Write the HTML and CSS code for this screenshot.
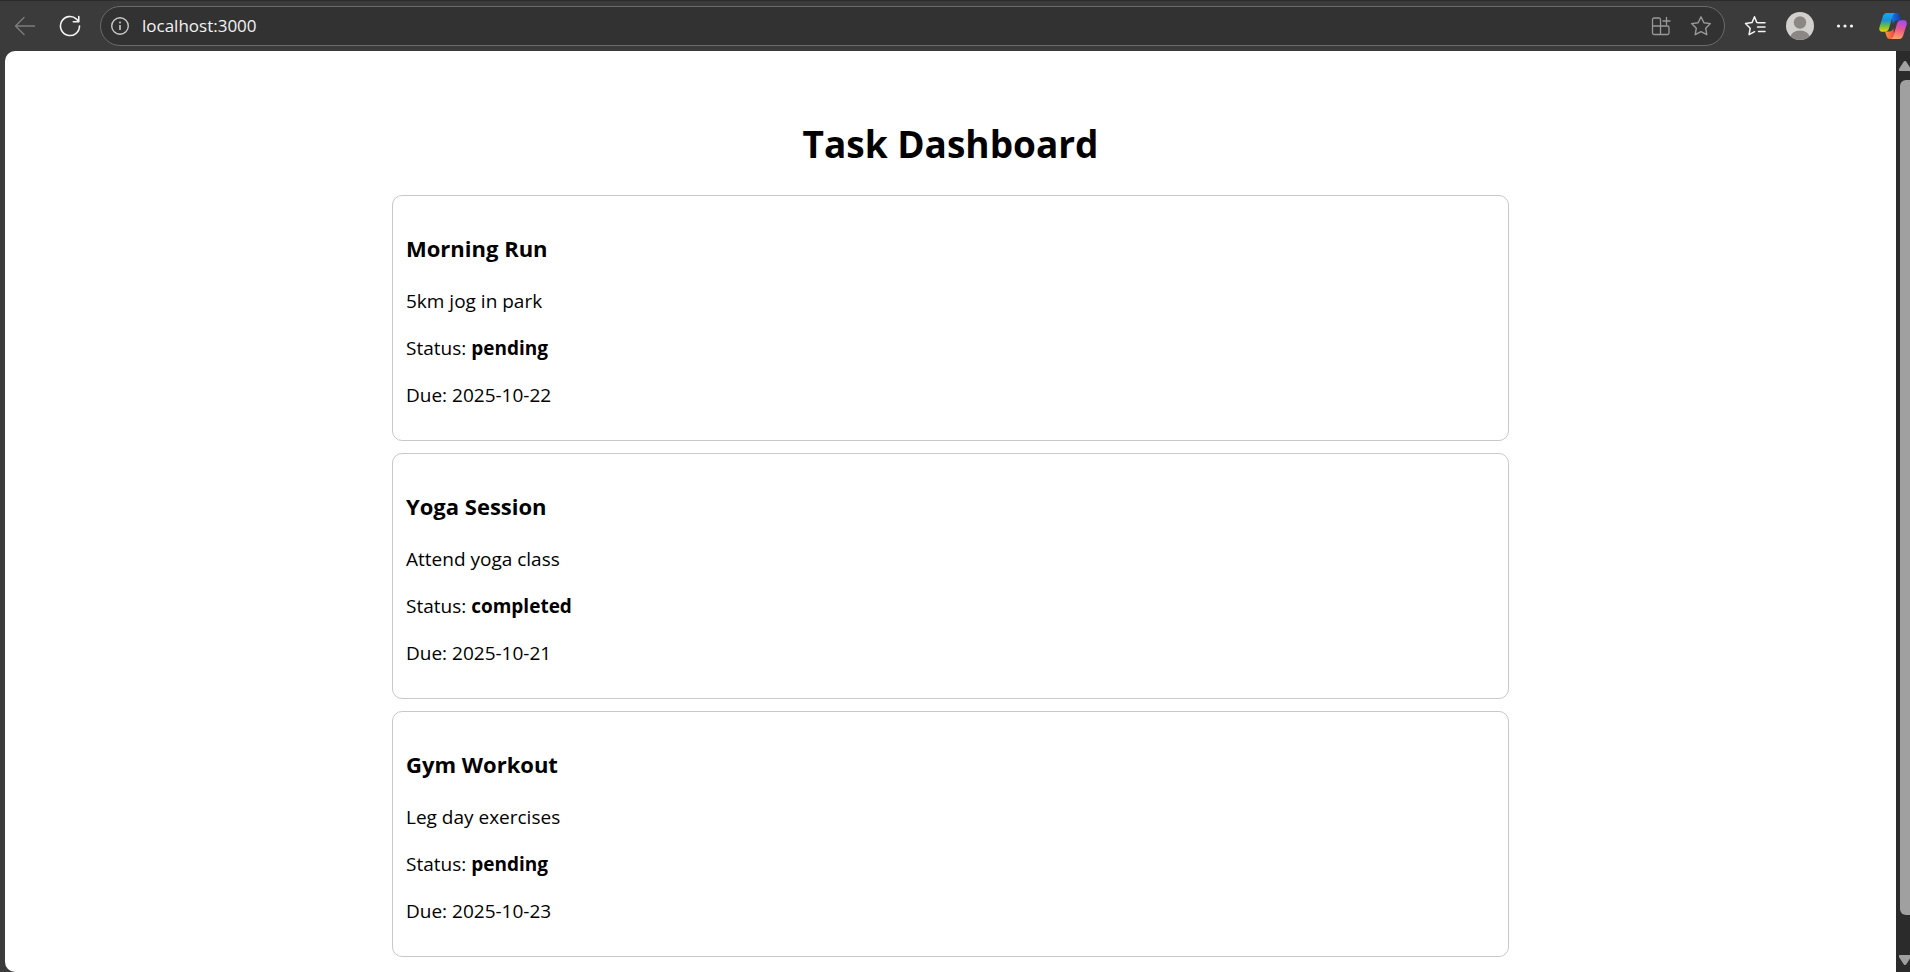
FILE: index.html
```html
<!DOCTYPE html>
<html lang="en">
<head>
<meta charset="utf-8">
<title>Task Dashboard</title>
<link rel="stylesheet" href="styles.css">
</head>
<body>
<header class="toolbar">
  <button class="icon-button back" aria-label="Back">
    <svg width="22" height="22" viewBox="0 0 22 22" fill="none" stroke="#7c7c7c" stroke-width="1.4" stroke-linecap="round" stroke-linejoin="round"><path d="M20.500 11H1.500M10 2.500L1.500 11l8.500 8.500"/></svg>
  </button>
  <button class="icon-button reload" aria-label="Refresh">
    <svg width="22" height="22" viewBox="0 0 22 22" fill="none" stroke="#f4f4f4" stroke-width="1.6" stroke-linecap="round" stroke-linejoin="round"><path d="M20.500 11a9.500 9.500 0 1 1-3-6.900L19.500 6.500M19.800 1.500v5.200h-5.500"/></svg>
  </button>
  <div class="address">
    <button class="icon-button info" aria-label="Site information">
      <svg width="20" height="20" viewBox="0 0 20 20" fill="none" stroke="#c8c8c8" stroke-width="1.4"><circle cx="10" cy="10" r="8.300"/><path d="M10 9v5" stroke-width="1.600"/><circle cx="10" cy="6.500" r="1" fill="#c8c8c8" stroke="none"/></svg>
    </button>
    <input class="url" type="text" value="localhost:3000" aria-label="Address">
    <button class="icon-button apps" aria-label="Install app">
      <svg width="20" height="20" viewBox="0 0 20 20" fill="none" stroke="#999" stroke-width="1.300" stroke-linejoin="round" stroke-linecap="round"><path d="M9.500 10V3.500a1.500 1.500 0 0 0-1.500-1.500H3a1.500 1.500 0 0 0-1.500 1.500V17A1.500 1.500 0 0 0 3 18.500h13.500A1.500 1.500 0 0 0 18 17v-5.500a1.500 1.500 0 0 0-1.500-1.500H1.500M9.500 10v8.500M15.500 1.500v7M12 5h7"/></svg>
    </button>
    <button class="icon-button" aria-label="Add to favorites">
      <svg width="22" height="22" viewBox="0 0 22 22" fill="none" stroke="#999" stroke-width="1.400" stroke-linejoin="round"><path d="M11 1.800l2.900 5.900 6.500.9-4.700 4.600 1.100 6.500L11 16.600l-5.800 3.100 1.100-6.500L1.600 8.600l6.500-.9z"/></svg>
    </button>
  </div>
  <button class="icon-button favorites" aria-label="Favorites">
    <svg width="22" height="22" viewBox="0 0 22 22" fill="none" stroke="#f4f4f4" stroke-width="1.500" stroke-linejoin="round" stroke-linecap="round"><path d="M14.500 7.700l-1.700-.2L10.500 1.800 8 7.600l-6.500.9 4.700 4.700-1.100 6.500 5.500-3M14.500 7.800H21M13.500 12.100H21M14.500 16.400H21"/></svg>
  </button>
  <button class="icon-button profile" aria-label="Profile">
    <svg width="28" height="28" viewBox="0 0 28 28"><defs><clipPath id="avatar"><circle cx="14" cy="14" r="14"/></clipPath></defs><g clip-path="url(#avatar)"><path fill="#d2d0cd" d="M0 0h28v28H0z"/><circle cx="14" cy="10.500" r="6.200" fill="#8b8784"/><ellipse cx="14" cy="26.500" rx="10" ry="8" fill="#8b8784"/></g></svg>
  </button>
  <button class="icon-button more" aria-label="Settings and more">
    <svg width="18" height="6" viewBox="0 0 18 6" fill="#f4f4f4"><circle cx="2.500" cy="3" r="1.600"/><circle cx="9" cy="3" r="1.600"/><circle cx="15.500" cy="3" r="1.600"/></svg>
  </button>
  <button class="icon-button copilot" aria-label="Copilot">
    <svg width="28" height="26" viewBox="0 0 28 26">
      <defs>
        <linearGradient id="left" x1="0" y1="0" x2="0" y2="1"><stop offset="0" stop-color="#13a9f5"/><stop offset=".4" stop-color="#1a91d8"/><stop offset=".7" stop-color="#6cc13d"/><stop offset="1" stop-color="#f6cf0a"/></linearGradient>
        <linearGradient id="right" x1=".5" y1="0" x2=".3" y2="1"><stop offset="0" stop-color="#a34df2"/><stop offset=".45" stop-color="#ed578c"/><stop offset="1" stop-color="#ffa55c"/></linearGradient>
        <linearGradient id="fold"><stop offset="0" stop-color="#1b75e8"/><stop offset="1" stop-color="#163cad"/></linearGradient>
        <linearGradient id="base"><stop offset="0" stop-color="#ff9a35"/><stop offset="1" stop-color="#ed3f45"/></linearGradient>
      </defs>
      <path fill="url(#fold)" d="M12 0h5c2 0 2.900 1.200 3.500 3l1.400 4.500H18c-2.500 0-3.500 1.200-4.200 3.500z"/>
      <path fill="url(#base)" d="M6 18.500h4c2.500 0 3.500-1 4.200-3.500L16 26h-5c-2 0-2.900-1.200-3.500-3z"/>
      <path fill="url(#left)" d="M7.800 0h8.500c-1.800.4-2.400 2-3 4l-3.200 11c-.8 2.600-1.900 3.700-4.500 3.700H3C.4 18.700-.2 16.500.5 14L3.800 3.500C4.500 1.200 5.600 0 7.800 0z"/>
      <path fill="url(#right)" d="M20.200 26h-8.500c1.800-.4 2.400-2 3-4l3.200-11c.8-2.600 1.900-3.700 4.500-3.700H25c2.600 0 3.200 2.200 2.500 4.700l-3.300 10.500c-.7 2.300-1.800 3.500-4 3.500z"/>
    </svg>
  </button>
</header>
<div class="viewport">
  <main class="page">
    <h1 class="title">Task Dashboard</h1>
    <div class="tasks">
      <article class="task">
        <h3>Morning Run</h3>
        <p>5km jog in park</p>
        <p>Status: <strong>pending</strong></p>
        <p>Due: 2025-10-22</p>
      </article>
      <article class="task">
        <h3>Yoga Session</h3>
        <p>Attend yoga class</p>
        <p>Status: <strong>completed</strong></p>
        <p>Due: 2025-10-21</p>
      </article>
      <article class="task">
        <h3>Gym Workout</h3>
        <p>Leg day exercises</p>
        <p>Status: <strong>pending</strong></p>
        <p>Due: 2025-10-23</p>
      </article>
    </div>
  </main>
  <div class="scrollbar" aria-hidden="true">
    <svg width="11" height="10" viewBox="0 0 11 10" fill="#a0a0a0"><path d="M6 0q1 0 1.500 1L12 8q.8 2-1 2H1Q-.8 10 0 8l4.500-7Q5 0 6 0z"/></svg>
    <div class="thumb"></div>
    <svg width="11" height="10" viewBox="0 0 11 10" fill="#a0a0a0"><path d="M6 10q1 0 1.500-1L12 2q.8-2-1-2H1Q-.8 0 0 2l4.500 7q.5 1 1.500 1z"/></svg>
  </div>
</div>
</body>
</html>
```
FILE: styles.css
```css
* {
  box-sizing: border-box;
}

body {
  margin: 0;
  min-height: 100vh;
  display: flex;
  flex-direction: column;
  background: #3b3b3b;
  color: #000;
  font-family: "Segoe UI", "Open Sans", "Noto Sans", sans-serif;
  font-size: 19px;
  line-height: 27px;
}

.toolbar {
  display: flex;
  align-items: center;
  height: 51px;
  padding: 0 3px 0 14px;
  border-top: 1px solid #2b2b2b;
}

.icon-button {
  display: flex;
  flex: none;
  padding: 0;
  border: 0;
  background: none;
}

.reload {
  margin-left: 23px;
}

.address {
  flex: 1;
  display: flex;
  align-items: center;
  height: 40px;
  margin-left: 19px;
  padding: 0 12px 0 9px;
  border: 1px solid #6b6b6b;
  border-radius: 20px;
  background: #323232;
}

.url {
  flex: 1;
  min-width: 0;
  height: 32px;
  margin: 0 12px;
  padding: 0 0 2px;
  border: 0;
  outline: 0;
  background: none;
  color: #f4f4f4;
  font: inherit;
  font-size: 17px;
}

.apps {
  margin-right: 19px;
}

.favorites {
  margin-left: 19px;
}

.profile {
  margin-left: 20px;
}

.more {
  margin-left: 22px;
}

.copilot {
  margin-left: 25px;
}

.viewport {
  flex: 1;
  display: flex;
  padding-left: 5px;
}

.page {
  flex: 1;
  padding: 65px 0 14px;
  border-radius: 10px 0 0 10px;
  background: #fff;
}

.title {
  margin: 0 0 24px;
  font-size: 37px;
  line-height: 55px;
  text-align: center;
}

.tasks {
  display: grid;
  gap: 12px;
  width: 100%;
  max-width: 1117px;
  margin: 0 auto;
}

.task {
  padding: 12px 13px 11px;
  border: 1px solid #c8c8c8;
  border-radius: 10px;
}

.task h3 {
  margin: 25px 0 24px;
  font-size: 22px;
  line-height: 31px;
}

.task p {
  margin: 20px 0;
}

.scrollbar {
  display: flex;
  flex-direction: column;
  width: 14px;
  padding: 10px 0 7px 3px;
  background: #2b2b2b;
}

.thumb {
  flex: 1;
  margin: 9px 0 40px 1px;
  border-radius: 6px 0 0 6px;
  background: #a0a0a0;
}
```
